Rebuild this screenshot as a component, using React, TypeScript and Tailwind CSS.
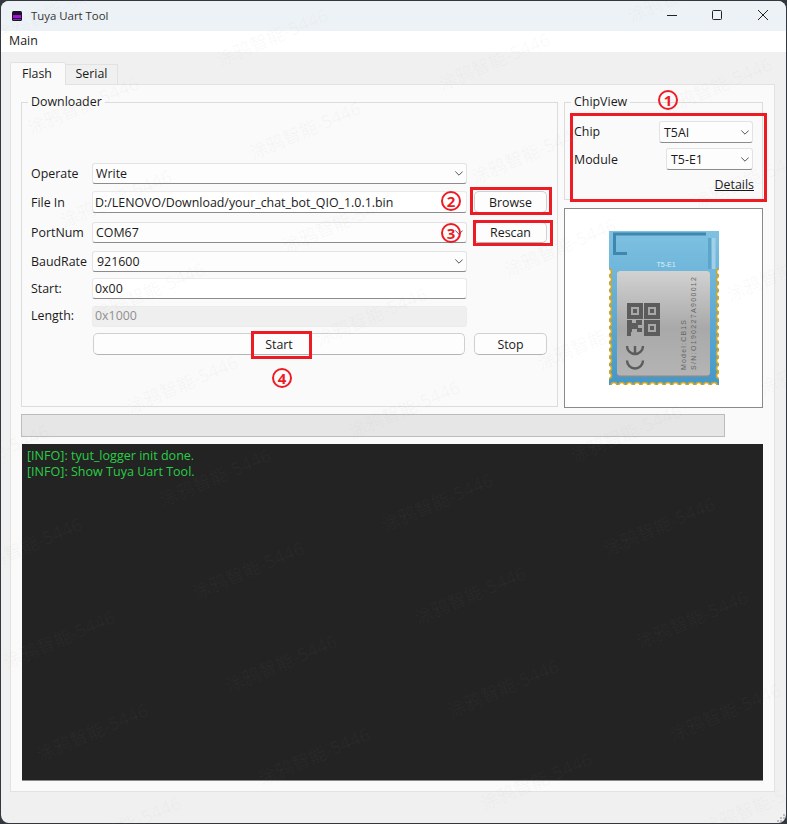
import React from "react";

const font = "font-['Open_Sans','Noto_Sans_CJK_SC',sans-serif]";

function Chevron() {
  return (
    <svg width="8" height="5" viewBox="0 0 8 5" className="shrink-0">
      <path d="M0.3 0.5 L4 4.2 L7.7 0.5" fill="none" stroke="#555" strokeWidth="1" />
    </svg>
  );
}

function Combo({ value, className }: { value: string; className: string }) {
  return (
    <div
      className={`flex items-center justify-between rounded-[3px] border border-[#e3e3e3] border-b-[#8c8c8c] bg-[#fdfdfd] pr-[3px] ${className}`}
    >
      <span className="pt-[2px]">{value}</span>
      <Chevron />
    </div>
  );
}

function Field({ value, className }: { value: string; className: string }) {
  return (
    <div
      className={`flex items-center rounded-[3px] border border-[#e9e9e9] border-b-[#8c8c8c] bg-white pt-[2px] pl-[2px] ${className}`}
    >
      {value}
    </div>
  );
}

function Btn({ label, className }: { label: string; className: string }) {
  return (
    <div
      className={`flex items-center justify-center rounded-[5px] border border-[#d0d0d0] border-b-[#b4b4b4] bg-[#fdfdfd] pt-[2px] ${className}`}
    >
      {label}
    </div>
  );
}

function Label({ text }: { text: string }) {
  return <span className="w-[61px] shrink-0 pt-[2px]">{text}</span>;
}

function ModuleArt() {
  const sides = Array.from({ length: 15 }, (_, i) => 41 + i * 7.4);
  const bottom = Array.from({ length: 14 }, (_, i) => 5 + i * 7.7);
  return (
    <svg width="110" height="154" viewBox="0 0 110 154">
      <defs>
        <linearGradient id="pcb" x1="0" y1="0" x2="0" y2="1">
          <stop offset="0" stopColor="#7fc1e1" />
          <stop offset="1" stopColor="#4298c9" />
        </linearGradient>
        <linearGradient id="shield" x1="0" y1="0" x2="0" y2="1">
          <stop offset="0" stopColor="#d2d2d2" />
          <stop offset="0.55" stopColor="#a9a9a9" />
          <stop offset="1" stopColor="#b4b4b4" />
        </linearGradient>
      </defs>
      <rect width="110" height="154" fill="url(#pcb)" />
      <path d="M5.5 24 V3 H97 M5.5 22.5 H18" fill="none" stroke="#3f87ae" strokeWidth="3" />
      <rect x="99" y="7" width="3" height="31" fill="#5ea5ca" />
      <rect x="103" y="7" width="3.5" height="31" fill="#a2d0e8" />
      <text x="57" y="36" textAnchor="middle" fontSize="7" fill="#dceefa" fontFamily="Liberation Sans">
        T5-E1
      </text>
      {sides.map((y) => (
        <g key={y}>
          <circle cx="-0.5" cy={y} r="3" fill="#fff" stroke="#d0a62a" strokeWidth="1.6" />
          <circle cx="110.5" cy={y} r="3" fill="#fff" stroke="#d0a62a" strokeWidth="1.6" />
        </g>
      ))}
      {bottom.map((x) => (
        <circle key={x} cx={x} cy="154.5" r="3" fill="#fff" stroke="#d0a62a" strokeWidth="1.6" />
      ))}
      <rect x="8" y="40" width="93" height="106" rx="3" fill="#8a8a8a" />
      <rect x="8" y="40" width="93" height="104.5" rx="3" fill="url(#shield)" />
      {[
        [18, 72],
        [35, 72],
        [35, 89],
      ].map(([x, y]) => (
        <g key={`${x}-${y}`}>
          <rect x={x} y={y} width="16" height="16" fill="#5c5c5c" />
          <rect x={x + 4} y={y + 4} width="8" height="8" fill="#a8a8a8" />
          <rect x={x + 6} y={y + 6} width="4" height="4" fill="#5c5c5c" />
        </g>
      ))}
      <path
        d="M18 89 h5 v3 h4 v-3 h6 v5 h-4 v3 h4 v4 h-5 v-3 h-5 v3 h-1 v4 h-4 z"
        fill="#5c5c5c"
      />
      <path d="M18 115 A8 8 0 0 0 34 115 M26 115 V122" fill="none" stroke="#5c5c5c" strokeWidth="2.4" />
      <path d="M18 129.5 A8 8 0 0 0 34 129.5" fill="none" stroke="#5c5c5c" strokeWidth="2.4" />
      <text
        transform="translate(77 139) rotate(-90)"
        fontSize="7"
        fill="#666"
        textLength="50"
        fontFamily="Liberation Sans"
      >
        Model:CB1S
      </text>
      <text
        transform="translate(87 139) rotate(-90)"
        fontSize="7"
        fill="#666"
        textLength="93"
        fontFamily="Liberation Sans"
      >
        S/N:O190227A900012
      </text>
    </svg>
  );
}

function Mark({ n, className }: { n: string; className: string }) {
  return (
    <div
      className={`absolute flex h-[20px] w-[20px] items-center justify-center rounded-full border-2 border-[#ed1c24] text-[15px] leading-none font-bold text-[#ed1c24] ${className}`}
    >
      {n}
    </div>
  );
}

function Annotations() {
  return (
    <>
      <div className="absolute top-[113px] left-[570px] h-[89px] w-[197px] border-[3px] border-[#ed1c24]" />
      <div className="absolute top-[187px] left-[470px] h-[28px] w-[82px] border-[3px] border-[#ed1c24]" />
      <div className="absolute top-[220px] left-[473px] h-[26px] w-[80px] border-[3px] border-[#ed1c24]" />
      <div className="absolute top-[331px] left-[251px] h-[28px] w-[61px] border-[3px] border-[#ed1c24]" />
      <Mark n="1" className="top-[90px] left-[658px]" />
      <Mark n="2" className="top-[191px] left-[441px]" />
      <Mark n="3" className="top-[223px] left-[441px]" />
      <Mark n="4" className="top-[368px] left-[272px]" />
    </>
  );
}

// watermark lattice measured off the screenshot
function Watermarks() {
  const marks: { x: number; y: number }[] = [];
  for (let j = -2; j < 9; j++) {
    for (let i = -2; i < 5; i++) {
      const x = 83 + i * 222 + j * 33;
      const y = 105 + i * 24.5 + j * 93;
      if (x > -40 && x < 827 && y > -20 && y < 844) marks.push({ x, y });
    }
  }
  return (
    <div className="pointer-events-none absolute inset-0 overflow-hidden">
      {marks.map((m) => (
        <span
          key={`${m.x}-${m.y}`}
          className="absolute -translate-x-1/2 -translate-y-1/2 -rotate-[23deg] text-[18px] whitespace-nowrap text-[#999999]/[0.06]"
          style={{ left: m.x, top: m.y }}
        >
          涂鸦智能-5446
        </span>
      ))}
    </div>
  );
}

export default function App() {
  return (
    <div
      className={`relative h-[824px] w-[787px] overflow-hidden bg-[#33383f] text-[12.4px] leading-none text-[#1a1a1a] ${font}`}
    >
      <div className="mt-[1px] ml-[1px] flex h-[822px] w-[785px] flex-col overflow-hidden rounded-[8px] bg-[#f0f0f0]">
        {/* Title bar */}
        <div className="flex h-[30px] shrink-0 items-center bg-[#edf2f6] pl-[11px]">
          <svg width="10" height="10" viewBox="0 0 10 10" className="mr-[9px]">
            <rect width="10" height="10" rx="1.5" fill="#1d1228" />
            <rect x="1" y="4" width="8" height="3" fill="#a412d6" />
            <rect x="1" y="8" width="8" height="1" fill="#7a2bb8" />
          </svg>
          <span className="text-[11.4px] text-[#333]">Tuya Uart Tool</span>
          <div className="mb-[2px] ml-auto flex items-center gap-[35px] pr-[18px]">
            <svg width="10" height="10" viewBox="0 0 10 10">
              <path d="M0 5.5 H10" stroke="#222" />
            </svg>
            <svg width="10" height="10" viewBox="0 0 10 10" className="mr-[1px]">
              <rect x="0.5" y="0.5" width="9" height="9" rx="1" fill="none" stroke="#222" />
            </svg>
            <svg width="10" height="10" viewBox="0 0 10 10">
              <path d="M0 0 L10 10 M10 0 L0 10" stroke="#222" />
            </svg>
          </div>
        </div>

        {/* Menu */}
        <div className="flex h-[21px] shrink-0 items-center bg-white pl-[8px]">Main</div>

        {/* Tabs */}
        <div className="flex h-[32px] shrink-0 items-end pl-[9px]">
          <div className="z-10 -mb-px flex h-[23px] w-[56px] items-center justify-center rounded-t-[2px] border border-b-0 border-[#e2e2e2] bg-[#fafafa] pr-[2px]">
            Flash
          </div>
          <div className="flex h-[20px] w-[52px] items-center justify-center border border-b-0 border-l-0 border-[#e2e2e2] bg-[#f0f0f0]">
            Serial
          </div>
        </div>

        {/* Tab pane */}
        <div className="ml-[9px] h-[708px] w-[765px] shrink-0 border border-[#e2e2e2] bg-[#fafafa] pt-[17px] pl-[10px]">
          <div className="flex gap-[6px]">
            {/* Downloader */}
            <div className="relative h-[305px] w-[537px] shrink-0 border border-[#dcdcdc] pt-[60px] pl-[9px]">
              <span className="absolute -top-[7px] left-[6px] bg-[#fafafa] px-[3px]">Downloader</span>
              <div className="flex h-[21px] items-center">
                <Label text="Operate" />
                <Combo value="Write" className="h-[21px] w-[375px] pl-[3px]" />
              </div>
              <div className="mt-[7px] flex h-[22px] items-center">
                <Label text="File In" />
                <Field value="D:/LENOVO/Download/your_chat_bot_QIO_1.0.1.bin" className="h-[22px] w-[375px]" />
                <Btn label="Browse" className="ml-[7px] h-[22px] w-[73px]" />
              </div>
              <div className="mt-[9px] flex h-[21px] items-center">
                <Label text="PortNum" />
                <Combo value="COM67" className="h-[21px] w-[375px] pl-[3px]" />
                <Btn label="Rescan" className="ml-[7px] h-[21px] w-[73px]" />
              </div>
              <div className="mt-[8px] flex h-[21px] items-center">
                <Label text="BaudRate" />
                <Combo value="921600" className="h-[21px] w-[375px] pl-[4px]" />
              </div>
              <div className="mt-[6px] flex h-[21px] items-center">
                <Label text="Start:" />
                <Field value="0x00" className="h-[21px] w-[375px]" />
              </div>
              <div className="mt-[7px] flex h-[21px] items-center">
                <span className="w-[61px] shrink-0">Length:</span>
                <div className="flex h-[21px] w-[375px] items-center rounded-[3px] border border-[#ececec] bg-[#efefef] pl-[2px] text-[#8f8f8f]">
                  0x1000
                </div>
              </div>
              <div className="mt-[6px] flex h-[22px] items-center pl-[62px]">
                <Btn label="Start" className="h-[22px] w-[372px]" />
                <Btn label="Stop" className="ml-[9px] h-[22px] w-[73px]" />
              </div>
            </div>

            {/* Right column */}
            <div className="flex w-[199px] shrink-0 flex-col gap-[8px]">
              <div className="relative h-[98px] border border-[#dcdcdc] pt-[18px] pr-[9px] pl-[9px]">
                <span className="absolute -top-[7px] left-[6px] bg-[#fafafa] px-[3px]">ChipView</span>
                <div className="flex h-[22px] items-center justify-between">
                  <span className="pt-[1px]">Chip</span>
                  <Combo value="T5AI" className="h-[22px] w-[94px] pl-[4px]" />
                </div>
                <div className="mt-[5px] flex h-[22px] items-center justify-between">
                  <span className="pt-[2px]">Module</span>
                  <Combo value="T5-E1" className="h-[22px] w-[87px] pl-[4px]" />
                </div>
                <div className="mt-[9px] -mr-[1px] text-right underline">Details</div>
              </div>
              <div className="flex h-[200px] items-center justify-center border border-[#8a8a8a] bg-white">
                <ModuleArt />
              </div>
            </div>
          </div>

          {/* Progress */}
          <div className="mt-[6px] h-[23px] w-[704px] border border-[#bcbcbc] bg-[#e6e6e6]" />

          {/* Log */}
          <div className="mt-[7px] ml-[1px] h-[337px] w-[741px] border-b border-[#8a8a8a] bg-[#232323] pt-[4px] pl-[5px] text-[12.55px] text-[#27cf45]">
            <div className="h-[16px] leading-[16px]">[INFO]: tyut_logger init done.</div>
            <div className="h-[16px] leading-[16px]">[INFO]: Show Tuya Uart Tool.</div>
          </div>
        </div>

        {/* Resize grip */}
        <div className="flex flex-1 items-end justify-end pr-[1px] pb-[1px]">
          <svg width="9" height="9" viewBox="0 0 9 9">
            <path d="M7 1 h2 v2 h-2 z M4 4 h2 v2 h-2 z M7 4 h2 v2 h-2 z M1 7 h2 v2 h-2 z M4 7 h2 v2 h-2 z M7 7 h2 v2 h-2 z" fill="#bdbdbd" />
          </svg>
        </div>
      </div>

      <Annotations />
      <Watermarks />
    </div>
  );
}
